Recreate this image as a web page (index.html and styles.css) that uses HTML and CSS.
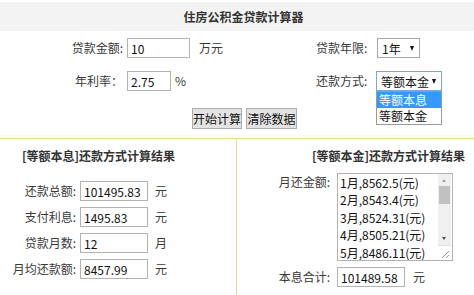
FILE: index.html
```html
<!DOCTYPE html>
<html lang="zh-CN">
<head>
<meta charset="utf-8">
<title>住房公积金贷款计算器</title>
<link rel="stylesheet" href="styles.css">
</head>
<body>
<div class="calc">
  <div class="title">住房公积金贷款计算器</div>

  <div class="form">
    <div class="lbl-r">贷款金额:</div>
    <div class="field"><input class="input w63" value="10"><span class="unit u-wan">万元</span></div>
    <div class="lbl">贷款年限:</div>
    <div class="field"><div class="select w43"><span>1年</span><i class="arrow"></i></div></div>

    <div class="lbl-r">年利率：</div>
    <div class="field"><input class="input w44" value="2.75"><span class="unit u-pct">%</span></div>
    <div class="lbl">还款方式:</div>
    <div class="field">
      <div class="select w66 focus"><span>等额本金</span><i class="arrow"></i>
        <ul class="options">
          <li class="opt active">等额本息</li>
          <li class="opt">等额本金</li>
        </ul>
      </div>
    </div>
  </div>

  <div class="actions">
    <button class="btn b50">开始计算</button>
    <button class="btn b51">清除数据</button>
  </div>

  <div class="results">
    <section class="res res-left">
      <h3 class="res-title">[等额本息]还款方式计算结果</h3>
      <div class="res-grid">
        <div class="rl">还款总额:</div><input class="input w68" value="101495.83"><span class="ru">元</span>
        <div class="rl">支付利息:</div><input class="input w68" value="1495.83"><span class="ru">元</span>
        <div class="rl">贷款月数:</div><input class="input w68" value="12"><span class="ru">月</span>
        <div class="rl">月均还款额:</div><input class="input w68" value="8457.99"><span class="ru">元</span>
      </div>
    </section>
    <section class="res res-right">
      <h3 class="res-title rt">[等额本金]还款方式计算结果</h3>
      <div class="rr-grid">
        <div class="rrl top">月还金额:</div>
        <div class="area">
          <div class="area-lines">
            <div>1月,8562.5(元)</div>
            <div>2月,8543.4(元)</div>
            <div>3月,8524.31(元)</div>
            <div>4月,8505.21(元)</div>
            <div>5月,8486.11(元)</div>
          </div>
          <div class="sbar">
            <div class="sb-up"></div>
            <div class="sb-thumb"></div>
            <div class="sb-track"></div>
            <div class="sb-down"></div>
            <div class="sb-grip">
              <svg width="12" height="13" viewBox="0 0 12 13"><path d="M10 4 L3 11 M10 8 L7 11" stroke="#9a9a9a" stroke-width="1" fill="none"/></svg>
            </div>
          </div>
        </div>
        <div class="rrl">本息合计:</div>
        <div class="field"><input class="input w68" value="101489.58"><span class="unit u-yuan">元</span></div>
      </div>
    </section>
  </div>
</div>
</body>
</html>
```

FILE: styles.css
```css
html, body {
  margin: 0;
  padding: 0;
}
body {
  width: 474px;
  height: 295px;
  overflow: hidden;
  background: #fff;
  font-family: "Noto Sans CJK SC", "Microsoft YaHei", "Noto Sans", sans-serif;
  font-size: 12px;
  color: #3a3a3a;
}
.title {
  margin-top: 2px;
  height: 29px;
  line-height: 29px;
  background: #f3f3f3;
  text-align: center;
  font-weight: bold;
  color: #333;
  padding-left: 13px;
}
.form {
  display: grid;
  grid-template-columns: 127px 189px 61px 1fr;
  grid-auto-rows: 20px;
  row-gap: 13px;
  margin-top: 7px;
  align-items: center;
}
.lbl-r {
  text-align: right;
  padding-right: 4px;
  line-height: 20px;
}
.lbl {
  line-height: 20px;
}
.field {
  display: flex;
  align-items: center;
  height: 20px;
}
.input {
  box-sizing: border-box;
  height: 20px;
  border: 1px solid #b3b3b3;
  border-radius: 0;
  padding: 0 3px;
  margin: 0;
  font-family: inherit;
  font-size: 12px;
  line-height: 18px;
  color: #111;
  background: #fff;
  outline: none;
}
.w63 { width: 63px; }
.w44 { width: 44px; }
.w68 { width: 68px; }
.unit { line-height: 20px; }
.u-wan { margin-left: 9px; }
.u-pct { margin-left: 4px; }
.u-yuan { margin-left: 8px; }

.select {
  position: relative;
  box-sizing: border-box;
  height: 20px;
  border: 1px solid #a9a9a9;
  background: #fff;
  display: flex;
  align-items: center;
  justify-content: space-between;
  padding: 0 5px 0 4px;
  color: #111;
}
.w43 { width: 43px; }
.w66 { width: 66px; margin-left: -1px; }
.select.focus { border-color: #7ea6d6; }
.arrow {
  width: 0;
  height: 0;
  border-left: 2.5px solid transparent;
  border-right: 2.5px solid transparent;
  border-top: 5px solid #111;
}
.options {
  position: absolute;
  top: 19px;
  left: -1px;
  width: 66px;
  box-sizing: border-box;
  margin: 0;
  padding: 0;
  list-style: none;
  border: 1px solid #9a9a9a;
  background: #fff;
  z-index: 5;
}
.opt {
  height: 16px;
  line-height: 16px;
  padding-left: 2px;
  color: #111;
}
.opt.active {
  background: #3399ff;
  color: #fff;
}

.actions {
  display: flex;
  justify-content: center;
  gap: 4px;
  margin-top: 17px;
  padding-left: 15px;
}
.btn {
  box-sizing: border-box;
  height: 21px;
  padding: 0;
  margin: 0;
  border: 1px solid #adadad;
  background: #e3e3e3;
  font-family: inherit;
  font-size: 12px;
  color: #111;
  line-height: 19px;
}
.b50 { width: 50px; }
.b51 { width: 51px; }

.results {
  margin-top: 9px;
  border-top: 1px solid #e4dc98;
  box-shadow: 0 -3px 0 #fdfbec;
  display: grid;
  grid-template-columns: 237px 1fr;
  height: 160px;
}
.res-left {
  border-right: 1px solid #e4dc98;
}
.res-title {
  margin: 0;
  font-size: 12px;
  font-weight: bold;
  color: #333;
  line-height: 16px;
  padding-top: 9px;
  padding-left: 22px;
}
.res-title.rt {
  padding-left: 75px;
}
.res-grid {
  display: grid;
  grid-template-columns: 80px 68px 1fr;
  grid-auto-rows: 20px;
  row-gap: 6px;
  align-items: center;
  margin-top: 17px;
}
.rl {
  text-align: right;
  padding-right: 4px;
  line-height: 20px;
}
.ru {
  margin-left: 7px;
  line-height: 20px;
}
.rr-grid {
  display: grid;
  grid-template-columns: 100px 1fr;
  row-gap: 6px;
  margin-top: 9px;
}
.rrl {
  text-align: right;
  padding-right: 7px;
  line-height: 20px;
}
.rrl.top {
  padding-top: 0;
  line-height: 18px;
}
.area {
  box-sizing: border-box;
  width: 116px;
  height: 88px;
  border: 1px solid #b3b3b3;
  display: flex;
  background: #fff;
}
.area-lines {
  flex: 1;
  padding-left: 2px;
  line-height: 17.4px;
  color: #111;
  overflow: hidden;
  white-space: nowrap;
}
.sbar {
  width: 13px;
  display: flex;
  flex-direction: column;
  background: #f0f0f0;
  margin-right: 1px;
}
.sb-up {
  height: 12px;
  position: relative;
}
.sb-up::after {
  content: "";
  position: absolute;
  left: 4px;
  top: 5px;
  border-left: 2.5px solid transparent;
  border-right: 2.5px solid transparent;
  border-bottom: 3px solid #a3a3a3;
}
.sb-thumb {
  height: 18px;
  margin: 0 1px;
  background: #c1c1c1;
}
.sb-track {
  flex: 1;
}
.sb-down {
  height: 10px;
  position: relative;
}
.sb-down::after {
  content: "";
  position: absolute;
  left: 4px;
  top: 2px;
  border-left: 2.5px solid transparent;
  border-right: 2.5px solid transparent;
  border-top: 3px solid #505050;
}
.sb-grip {
  height: 14px;
  background: #fff;
  border-top: 1px solid #e2e2e2;
  display: flex;
  align-items: flex-end;
  justify-content: flex-end;
}
.sb-grip svg {
  display: block;
}
```
